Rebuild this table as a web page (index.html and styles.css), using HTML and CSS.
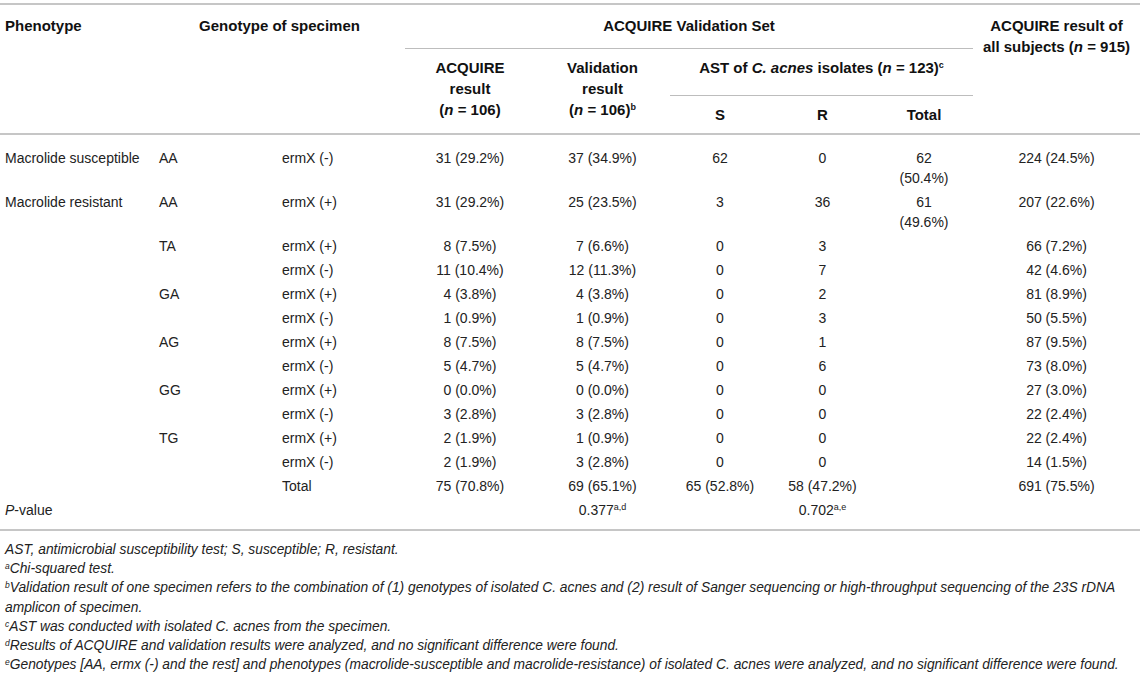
FILE: index.html
```
<!DOCTYPE html>
<html>
<head>
    <title>ACQUIRE validation - Table</title>
    <link rel="stylesheet" href="styles.css">
</head>
<body>
    <div class="page">
        <table class="results">
            <colgroup>
                <col class="c-pheno">
                <col class="c-geno">
                <col class="c-erm">
                <col class="c-acq">
                <col class="c-val">
                <col class="c-s">
                <col class="c-r">
                <col class="c-total">
                <col class="c-all">
            </colgroup>
            <thead>
                <tr class="row-a">
                    <th class="left" rowspan="3">Phenotype</th>
                    <th colspan="2" rowspan="3">Genotype of specimen</th>
                    <th colspan="5" class="group">ACQUIRE Validation Set</th>
                    <th rowspan="3" class="all">ACQUIRE result of<br>all subjects (<i>n</i> = 915)</th>
                </tr>
                <tr class="row-b">
                    <th rowspan="2">ACQUIRE<br>result<br>(<i>n</i> = 106)</th>
                    <th rowspan="2">Validation<br>result<br>(<i>n</i> = 106)<sup>b</sup></th>
                    <th colspan="3" class="group">AST of <i>C. acnes</i> isolates (<i>n</i> = 123)<sup>c</sup></th>
                </tr>
                <tr class="row-c">
                    <th>S</th>
                    <th>R</th>
                    <th>Total</th>
                </tr>
            </thead>
            <tbody>
                <tr class="first">
                    <td class="left">Macrolide susceptible</td>
                    <td class="left">AA</td>
                    <td class="left">ermX (-)</td>
                    <td>31 (29.2%)</td>
                    <td>37 (34.9%)</td>
                    <td>62</td>
                    <td>0</td>
                    <td>62<br>(50.4%)</td>
                    <td>224 (24.5%)</td>
                </tr>
                <tr>
                    <td class="left">Macrolide resistant</td>
                    <td class="left">AA</td>
                    <td class="left">ermX (+)</td>
                    <td>31 (29.2%)</td>
                    <td>25 (23.5%)</td>
                    <td>3</td>
                    <td>36</td>
                    <td>61<br>(49.6%)</td>
                    <td>207 (22.6%)</td>
                </tr>
                <tr>
                    <td></td>
                    <td class="left">TA</td>
                    <td class="left">ermX (+)</td>
                    <td>8 (7.5%)</td>
                    <td>7 (6.6%)</td>
                    <td>0</td>
                    <td>3</td>
                    <td></td>
                    <td>66 (7.2%)</td>
                </tr>
                <tr>
                    <td></td>
                    <td></td>
                    <td class="left">ermX (-)</td>
                    <td>11 (10.4%)</td>
                    <td>12 (11.3%)</td>
                    <td>0</td>
                    <td>7</td>
                    <td></td>
                    <td>42 (4.6%)</td>
                </tr>
                <tr>
                    <td></td>
                    <td class="left">GA</td>
                    <td class="left">ermX (+)</td>
                    <td>4 (3.8%)</td>
                    <td>4 (3.8%)</td>
                    <td>0</td>
                    <td>2</td>
                    <td></td>
                    <td>81 (8.9%)</td>
                </tr>
                <tr>
                    <td></td>
                    <td></td>
                    <td class="left">ermX (-)</td>
                    <td>1 (0.9%)</td>
                    <td>1 (0.9%)</td>
                    <td>0</td>
                    <td>3</td>
                    <td></td>
                    <td>50 (5.5%)</td>
                </tr>
                <tr>
                    <td></td>
                    <td class="left">AG</td>
                    <td class="left">ermX (+)</td>
                    <td>8 (7.5%)</td>
                    <td>8 (7.5%)</td>
                    <td>0</td>
                    <td>1</td>
                    <td></td>
                    <td>87 (9.5%)</td>
                </tr>
                <tr>
                    <td></td>
                    <td></td>
                    <td class="left">ermX (-)</td>
                    <td>5 (4.7%)</td>
                    <td>5 (4.7%)</td>
                    <td>0</td>
                    <td>6</td>
                    <td></td>
                    <td>73 (8.0%)</td>
                </tr>
                <tr>
                    <td></td>
                    <td class="left">GG</td>
                    <td class="left">ermX (+)</td>
                    <td>0 (0.0%)</td>
                    <td>0 (0.0%)</td>
                    <td>0</td>
                    <td>0</td>
                    <td></td>
                    <td>27 (3.0%)</td>
                </tr>
                <tr>
                    <td></td>
                    <td></td>
                    <td class="left">ermX (-)</td>
                    <td>3 (2.8%)</td>
                    <td>3 (2.8%)</td>
                    <td>0</td>
                    <td>0</td>
                    <td></td>
                    <td>22 (2.4%)</td>
                </tr>
                <tr>
                    <td></td>
                    <td class="left">TG</td>
                    <td class="left">ermX (+)</td>
                    <td>2 (1.9%)</td>
                    <td>1 (0.9%)</td>
                    <td>0</td>
                    <td>0</td>
                    <td></td>
                    <td>22 (2.4%)</td>
                </tr>
                <tr>
                    <td></td>
                    <td></td>
                    <td class="left">ermX (-)</td>
                    <td>2 (1.9%)</td>
                    <td>3 (2.8%)</td>
                    <td>0</td>
                    <td>0</td>
                    <td></td>
                    <td>14 (1.5%)</td>
                </tr>
                <tr>
                    <td></td>
                    <td></td>
                    <td class="left">Total</td>
                    <td>75 (70.8%)</td>
                    <td>69 (65.1%)</td>
                    <td>65 (52.8%)</td>
                    <td>58 (47.2%)</td>
                    <td></td>
                    <td>691 (75.5%)</td>
                </tr>
                <tr class="last">
                    <td class="left"><i>P</i>-value</td>
                    <td></td>
                    <td></td>
                    <td></td>
                    <td>0.377<sup>a,d</sup></td>
                    <td></td>
                    <td>0.702<sup>a,e</sup></td>
                    <td></td>
                    <td></td>
                </tr>
            </tbody>
        </table>

        <div class="notes">
            <p>AST, antimicrobial susceptibility test; S, susceptible; R, resistant.</p>
            <p><sup>a</sup>Chi-squared test.</p>
            <p><sup>b</sup>Validation result of one specimen refers to the combination of (1) genotypes of isolated C. acnes and (2) result of Sanger sequencing or high-throughput sequencing of the 23S rDNA amplicon of specimen.</p>
            <p><sup>c</sup>AST was conducted with isolated C. acnes from the specimen.</p>
            <p><sup>d</sup>Results of ACQUIRE and validation results were analyzed, and no significant difference were found.</p>
            <p><sup>e</sup>Genotypes [AA, ermx (-) and the rest] and phenotypes (macrolide-susceptible and macrolide-resistance) of isolated C. acnes were analyzed, and no significant difference were found.</p>
        </div>
    </div>
</body>
</html>
```

FILE: styles.css
```
body {
    margin: 0;
    padding: 0;
    background: #fff;
    color: #222;
    font-family: "Liberation Sans", Arial, sans-serif;
}
.page {
    padding-top: 3px;
    width: 1146px;
}
.results {
    width: 1140px;
    table-layout: fixed;
    border-collapse: collapse;
    border-top: 2px solid #c6c6c6;
    border-bottom: 2px solid #c6c6c6;
    font-size: 14px;
}
.c-pheno { width: 154px; }
.c-geno { width: 123px; }
.c-erm { width: 128px; }
.c-acq { width: 130px; }
.c-val { width: 135px; }
.c-s { width: 100px; }
.c-r { width: 105px; }
.c-total { width: 98px; }
.c-all { width: 167px; }

th {
    font-weight: bold;
    font-size: 15px;
    color: #111;
    line-height: 21px;
    text-align: center;
    vertical-align: top;
    white-space: nowrap;
    padding: 10px 4px 0;
}
th.left {
    text-align: left;
    padding-left: 5px;
}
th.all {
    padding-left: 0;
    padding-right: 0;
}
thead {
    border-bottom: 2px solid #c6c6c6;
}
.row-a .group {
    padding-bottom: 12px;
    border-bottom: 1px solid #bdbdbd;
}
.row-b th {
    padding-top: 8px;
}
.row-b .group {
    padding-bottom: 17px;
    border-bottom: 1px solid #bdbdbd;
}
.row-c th {
    padding: 8px 4px 8px;
}
sup {
    font-size: 9px;
    line-height: 0;
    vertical-align: 5px;
}
td {
    line-height: 20px;
    padding: 2px 4px;
    text-align: center;
    vertical-align: top;
    white-space: nowrap;
}
td.left {
    text-align: left;
    padding-left: 5px;
}
.first td {
    padding-top: 13px;
}
.last td {
    padding-bottom: 9px;
}
.notes {
    padding-top: 9px;
    font-size: 13.8px;
    font-style: italic;
    line-height: 19.2px;
}
.notes p {
    margin: 0;
    padding-left: 5px;
}
.notes sup {
    font-size: 8.5px;
    vertical-align: 4px;
}
```
